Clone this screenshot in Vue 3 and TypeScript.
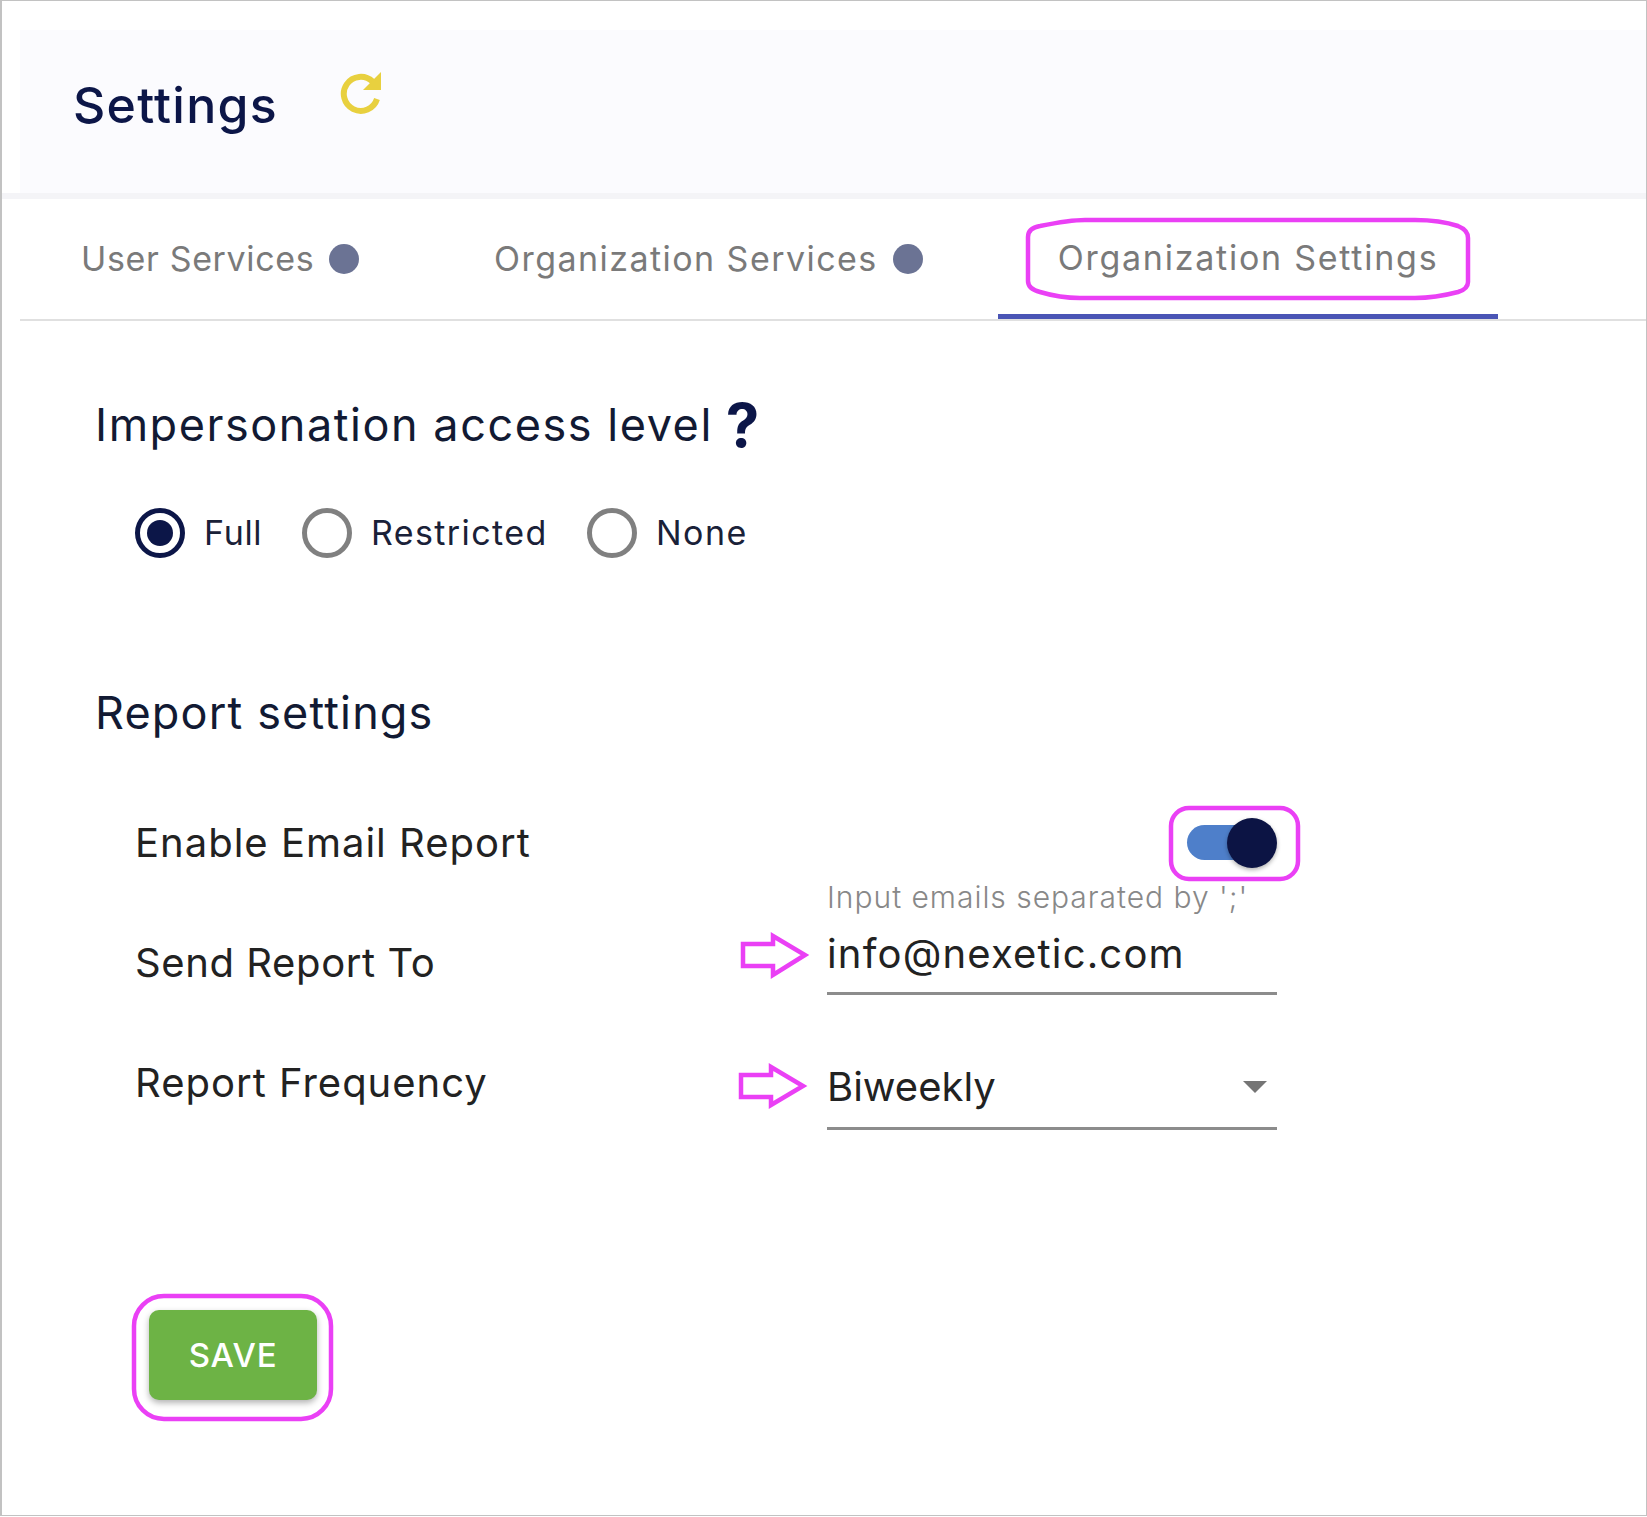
<script setup lang="ts">
const tabs = [
  { label: 'User Services', dot: true, cls: 'tab-user' },
  { label: 'Organization Services', dot: true, cls: 'tab-org' },
  { label: 'Organization Settings', dot: false, cls: 'tab-settings' },
]
const radios = [
  { label: 'Full', on: true, cls: 'r-full' },
  { label: 'Restricted', on: false, cls: 'r-restricted' },
  { label: 'None', on: false, cls: 'r-none' },
]
</script>

<template>
  <div class="page">
    <header class="head">
      <h1 class="title">Settings</h1>
      <svg class="refresh" width="42" height="42" viewBox="0 0 42 42" aria-hidden="true">
        <path d="M32.5 9.5 A17 17 0 1 0 37 27" fill="none" stroke="#e8d03f" stroke-width="6" />
        <path d="M41 0 V18 H23 Z" fill="#e8d03f" />
      </svg>
    </header>
    <div class="band"></div>

    <nav class="tabs">
      <div v-for="t in tabs" :key="t.label" class="tab" :class="t.cls">
        <span>{{ t.label }}</span>
        <i v-if="t.dot" class="dot"></i>
      </div>
    </nav>

    <main class="content">
      <h2 class="sec sec-access">Impersonation access level <b class="q">?</b></h2>
      <div class="radios">
        <label v-for="r in radios" :key="r.label" class="radio" :class="r.cls">
          <span class="ring" :class="{ on: r.on }"></span>
          <span>{{ r.label }}</span>
        </label>
      </div>

      <h2 class="sec sec-report">Report settings</h2>
      <div class="form">
        <div class="row row-toggle">
          <span class="lbl">Enable Email Report</span>
          <div class="switch"><span class="track"></span><span class="knob"></span></div>
        </div>
        <div class="row row-mail">
          <span class="lbl">Send Report To</span>
          <div class="field">
            <div class="hint">Input emails separated by ';'</div>
            <div class="value value-mail">info@nexetic.com</div>
          </div>
        </div>
        <div class="row row-freq">
          <span class="lbl">Report Frequency</span>
          <div class="field select">
            <div class="value value-freq">Biweekly</div>
            <i class="caret"></i>
          </div>
        </div>
      </div>
      <button class="save" type="button">SAVE</button>
    </main>

    <svg class="marks" width="1647" height="1517" viewBox="0 0 1647 1517" aria-hidden="true">
      <g fill="none" stroke="#ea40f5" stroke-width="4.5">
        <path d="M1028 237 Q1028 228 1040 226 Q1070 220 1085 220 H1415 Q1440 220 1458 226 Q1468 230 1468 238 V282 Q1468 289 1458 292 Q1435 298 1415 298 H1080 Q1060 298 1040 292 Q1028 289 1028 281 Z" />
        <rect x="1171" y="808" width="127" height="71" rx="18" />
        <path d="M743 944 H773 V936 L805 955 L773 975 V966 H743 Z" />
        <path d="M741 1075 H771 V1067 L803 1086 L771 1105 V1097 H741 Z" />
        <rect x="134" y="1296" width="197" height="123" rx="30" />
      </g>
    </svg>
  </div>
</template>

<style>
html, body { margin: 0; background: #fff; }
</style>

<style scoped>
.page {
  position: relative;
  width: 1647px;
  height: 1516px;
  box-sizing: border-box;
  border: 1px solid #c2c2c2;
  border-left-width: 2px;
  font-family: Inter, "Open Sans", sans-serif;
  overflow: hidden;
  background: #fff;
}
.head {
  display: flex;
  align-items: flex-start;
  margin: 29px 0 0 18px;
  height: 163px;
  padding-left: 53px;
  background: #fbfbfe;
}
.title {
  margin: 46px 0 0;
  font-size: 50px;
  line-height: 58px;
  font-weight: 500;
  letter-spacing: 1.25px;
  color: #0c1648;
  width: 267px;
}
.refresh { margin-top: 42px; }
.band { height: 6px; background: #f4f4f7; }
.tabs {
  display: flex;
  margin-left: 18px;
  height: 122px;
  box-sizing: border-box;
  border-bottom: 2px solid #e0e0e0;
  font-size: 34px;
  font-weight: 400;
  color: #7a7a7a;
}
.tab { display: flex; align-items: center; height: 120px; box-sizing: border-box; padding-bottom: 1px; white-space: nowrap; }
.tab-user { width: 433px; padding-left: 61px; letter-spacing: 0.65px; }
.tab-org { width: 545px; padding-left: 41px; letter-spacing: 1.45px; }
.tab-settings {
  width: 500px;
  justify-content: center;
  padding: 1px 0 0;
  border-bottom: 5px solid #4a55b5;
  letter-spacing: 1.75px;
}
.dot { width: 30px; height: 30px; border-radius: 50%; background: #6b7394; margin: 1px 0 0 15px; flex: none; }
.content { padding-left: 93px; color: #121a33; }
.sec { margin: 0; font-size: 45px; line-height: 54px; font-weight: 400; white-space: nowrap; }
.sec-access { margin-top: 77px; display: flex; align-items: center; height: 54px; letter-spacing: 1.55px; }
.q { font-size: 60px; font-weight: 700; color: #0c1648; margin-left: 13px; line-height: 54px; }
.radios { display: flex; margin: 56px 0 0 40px; font-size: 34px; line-height: 50px; color: #1a2138; }
.radio { display: flex; align-items: center; gap: 19px; }
.r-full { width: 167px; letter-spacing: 0.7px; }
.r-restricted { width: 285px; letter-spacing: 1.4px; }
.r-none { letter-spacing: 1.5px; }
.ring {
  width: 50px;
  height: 50px;
  box-sizing: border-box;
  border: 5px solid #808080;
  border-radius: 50%;
  display: flex;
  align-items: center;
  justify-content: center;
}
.ring.on { border-color: #0c1648; }
.ring.on::after { content: ""; width: 26px; height: 26px; border-radius: 50%; background: #0c1648; }
.sec-report { margin-top: 128px; letter-spacing: 1.15px; }
.form { margin: 78px 0 0 40px; font-size: 40px; color: #222; }
.row { display: grid; grid-template-columns: 692px 450px; }
.lbl { line-height: 48px; white-space: nowrap; letter-spacing: 1px; }
.row-mail .lbl { letter-spacing: 0.6px; }
.row-toggle { height: 50px; align-items: center; }
.switch { position: relative; width: 90px; height: 50px; justify-self: end; }
.track { position: absolute; left: 0; top: 7px; width: 70px; height: 35px; border-radius: 18px; background: #4e7fca; }
.knob {
  position: absolute;
  right: 0;
  top: 0;
  width: 50px;
  height: 50px;
  border-radius: 50%;
  background: #0c1444;
  box-shadow: 0 2px 4px rgba(0, 0, 0, 0.3);
}
.row-mail { margin-top: 11px; height: 113px; }
.row-mail .lbl { margin-top: 60px; }
.hint { font-size: 30px; line-height: 36px; font-weight: 300; color: #888; white-space: nowrap; letter-spacing: 0.97px; }
.field { border-bottom: 3px solid #8c8c8c; box-sizing: border-box; position: relative; }
.row-mail .field { height: 116px; }
.value { font-size: 40px; line-height: 50px; color: #222; }
.value-mail { margin-top: 14px; letter-spacing: 1.18px; }
.row-freq { margin-top: 55px; }
.row-freq .lbl { margin-top: 12px; }
.select { height: 83px; margin-top: 0; }
.value-freq { margin-top: 15px; }
.caret {
  position: absolute;
  right: 10px;
  top: 34px;
  width: 0;
  height: 0;
  border-left: 12px solid transparent;
  border-right: 12px solid transparent;
  border-top: 12px solid #757575;
}
.save {
  display: block;
  margin: 180px 0 0 54px;
  width: 168px;
  height: 90px;
  border: 0;
  border-radius: 10px;
  background: #6db345;
  color: #fff;
  font: 500 33px Inter, sans-serif;
  letter-spacing: 0.8px;
  box-shadow: 0 3px 6px rgba(0, 0, 0, 0.3);
}
.marks { position: absolute; left: -2px; top: -1px; pointer-events: none; }
</style>
